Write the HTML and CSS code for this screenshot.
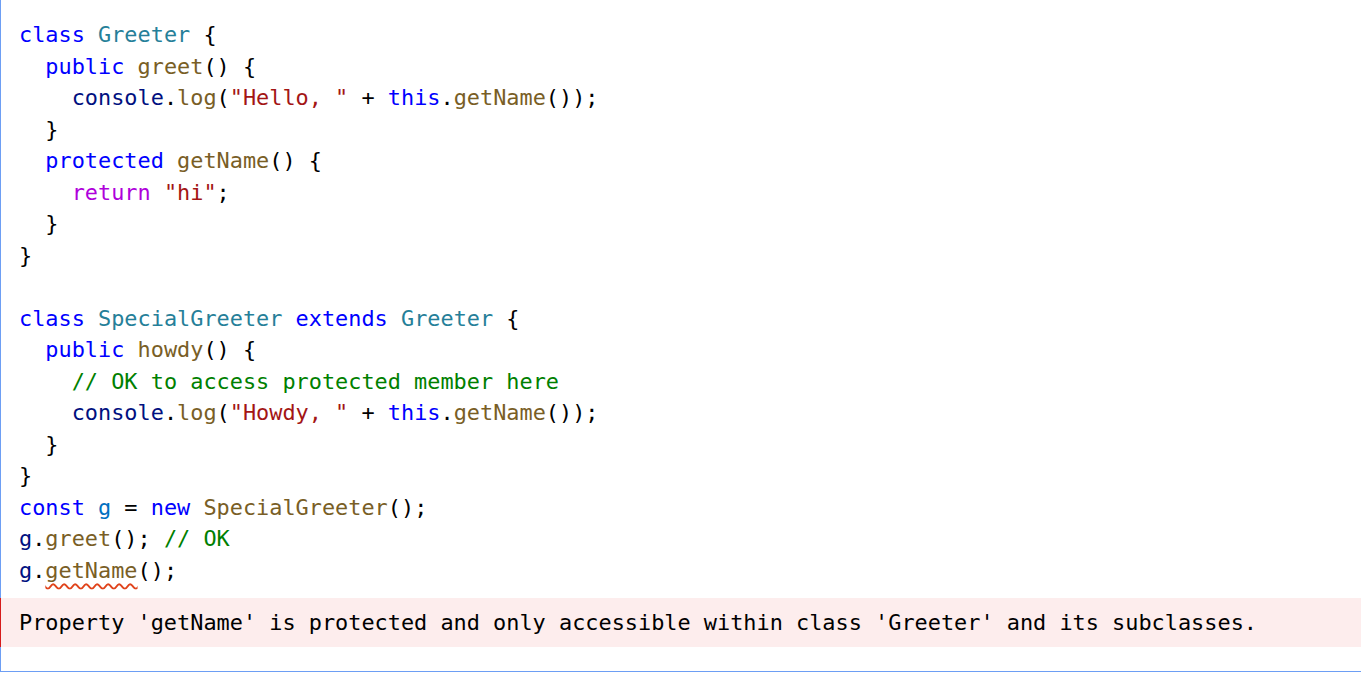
FILE: index.html
```html
<!DOCTYPE html>
<html lang="en">
<head>
<meta charset="utf-8">
<title>Greeter</title>
<link rel="stylesheet" href="styles.css">
</head>
<body>
<div class="editor">
<pre class="code"><span class="kw">class</span> <span class="ty">Greeter</span> {
  <span class="kw">public</span> <span class="fn">greet</span>() {
    <span class="var">console</span>.<span class="fn">log</span>(<span class="str">"Hello, "</span> + <span class="kw">this</span>.<span class="fn">getName</span>());
  }
  <span class="kw">protected</span> <span class="fn">getName</span>() {
    <span class="ctl">return</span> <span class="str">"hi"</span>;
  }
}

<span class="kw">class</span> <span class="ty">SpecialGreeter</span> <span class="kw">extends</span> <span class="ty">Greeter</span> {
  <span class="kw">public</span> <span class="fn">howdy</span>() {
    <span class="cm">// OK to access protected member here</span>
    <span class="var">console</span>.<span class="fn">log</span>(<span class="str">"Howdy, "</span> + <span class="kw">this</span>.<span class="fn">getName</span>());
  }
}
<span class="kw">const</span> <span class="cv">g</span> = <span class="kw">new</span> <span class="fn">SpecialGreeter</span>();
<span class="var">g</span>.<span class="fn">greet</span>(); <span class="cm">// OK</span>
<span class="var">g</span>.<span class="fn err">getName</span>();</pre>
<div class="error">Property 'getName' is protected and only accessible within class 'Greeter' and its subclasses.</div>
</div>
</body>
</html>
```
FILE: styles.css
```css
html, body {
  margin: 0;
  padding: 0;
  background: #ffffff;
}

.editor {
  box-sizing: border-box;
  width: 1361px;
  height: 672px;
  border-left: 1px solid #6d9ef4;
  border-bottom: 1px solid #6d9ef4;
  font-family: "DejaVu Sans Mono", monospace;
  font-size: 21.88px;
  color: #000000;
}

.code {
  margin: 0;
  padding: 19px 0 0 18px;
  font: inherit;
  line-height: 31.5px;
  white-space: pre;
}

.kw { color: #0000ff; }
.ty { color: #267f99; }
.fn { color: #795e26; }
.str { color: #a31515; }
.var { color: #001080; }
.ctl { color: #af00db; }
.cm { color: #008000; }
.cv { color: #0070c1; }

.err {
  text-decoration: underline wavy #e0431b;
  text-decoration-thickness: 1.5px;
  text-underline-offset: 5px;
  text-decoration-skip-ink: none;
}

.error {
  margin: 11.5px 0 0 -1px;
  height: 49px;
  line-height: 49px;
  padding-left: 18px;
  border-left: 1px solid #d61b1b;
  background: #fdeded;
  color: #000000;
  white-space: pre;
}
```
